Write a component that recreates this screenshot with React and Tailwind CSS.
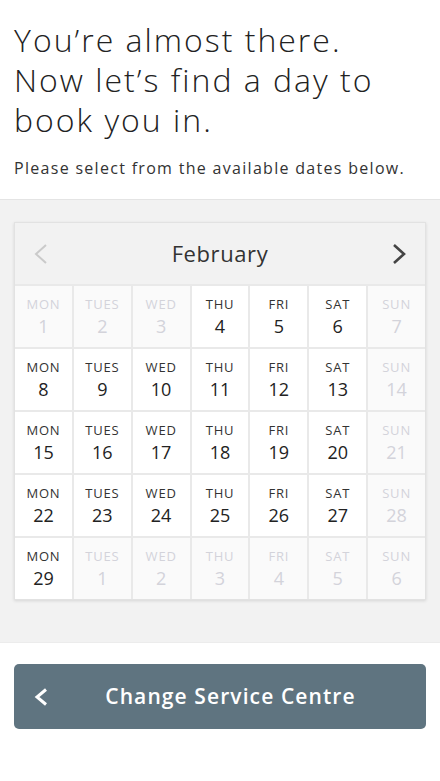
import React from 'react';

const font = { fontFamily: '"Open Sans", "Liberation Sans", sans-serif' };

const labels = ['MON', 'TUES', 'WED', 'THU', 'FRI', 'SAT', 'SUN'];

// [day number, available]
const weeks = [
  [[1, false], [2, false], [3, false], [4, true], [5, true], [6, true], [7, false]],
  [[8, true], [9, true], [10, true], [11, true], [12, true], [13, true], [14, false]],
  [[15, true], [16, true], [17, true], [18, true], [19, true], [20, true], [21, false]],
  [[22, true], [23, true], [24, true], [25, true], [26, true], [27, true], [28, false]],
  [[29, true], [1, false], [2, false], [3, false], [4, false], [5, false], [6, false]],
];

function DayCell({ label, day, on }) {
  return (
    <div
      className={
        'h-[61px] flex flex-col items-center pt-[10px] ' +
        (on ? 'bg-white cursor-pointer' : 'bg-[#fafafa]')
      }
    >
      <span
        className={
          'text-[13px] leading-[16px] tracking-[0.8px] ' + (on ? 'text-[#333]' : 'text-[#d3d3da]')
        }
      >
        {label}
      </span>
      <span className={'mt-[3px] text-[18px] leading-[22px] ' + (on ? 'text-[#222]' : 'text-[#d3d3da]')}>
        {day}
      </span>
    </div>
  );
}

export default function App() {
  return (
    <div className="w-[440px] min-h-[781px] bg-white" style={font}>
      <div className="px-[14px] pt-[20px] pb-[21px]">
        <h1 className="text-[32px] leading-[40px] text-[#222] font-light tracking-[2px]">
          You’re almost there.
          <br />
          Now let’s find a day to
          <br />
          book you in.
        </h1>
        <p className="mt-[18px] text-[16px] leading-[20px] text-[#333] tracking-[1.3px]">
          Please select from the available dates below.
        </p>
      </div>

      <div className="bg-[#f2f2f2] border-t border-[#e4e4e4] pt-[22px] pb-[42px] px-[14px]">
        <div className="border border-[#e2e2e2] shadow-[0_1px_3px_rgba(0,0,0,0.12)] bg-[#e9e9e9]">
          <div className="h-[61px] bg-[#f2f2f2] flex items-center justify-between px-[18px]">
            <svg width="16" height="22" viewBox="0 0 16 22" fill="none">
              <path d="M13 2 L3 11 L13 20" stroke="#cacaca" strokeWidth="2" />
            </svg>
            <span className="text-[22px] text-[#333] tracking-[0.6px]">February</span>
            <svg width="16" height="22" viewBox="0 0 16 22" fill="none">
              <path d="M3 2 L13 11 L3 20" stroke="#444" strokeWidth="2.6" />
            </svg>
          </div>
          <div className="grid grid-cols-7 gap-[2px] pt-[2px]">
            {weeks.map((week, wi) =>
              week.map(([day, on], di) => (
                <DayCell key={wi + '-' + di} label={labels[di]} day={day} on={on} />
              ))
            )}
          </div>
        </div>
      </div>

      <div className="border-t border-[#ececec] px-[14px] pt-[21px]">
        <button className="w-full h-[65px] rounded-[5px] bg-[#5f7480] flex items-center pl-[20px] pr-[13px]">
          <svg width="14" height="18" viewBox="0 0 14 18" fill="none">
            <path d="M12 1.5 L3 9 L12 16.5" stroke="#fff" strokeWidth="3" />
          </svg>
          <span className="flex-1 text-center text-white text-[21px] font-semibold tracking-[1.1px]">
            Change Service Centre
          </span>
        </button>
      </div>
    </div>
  );
}
